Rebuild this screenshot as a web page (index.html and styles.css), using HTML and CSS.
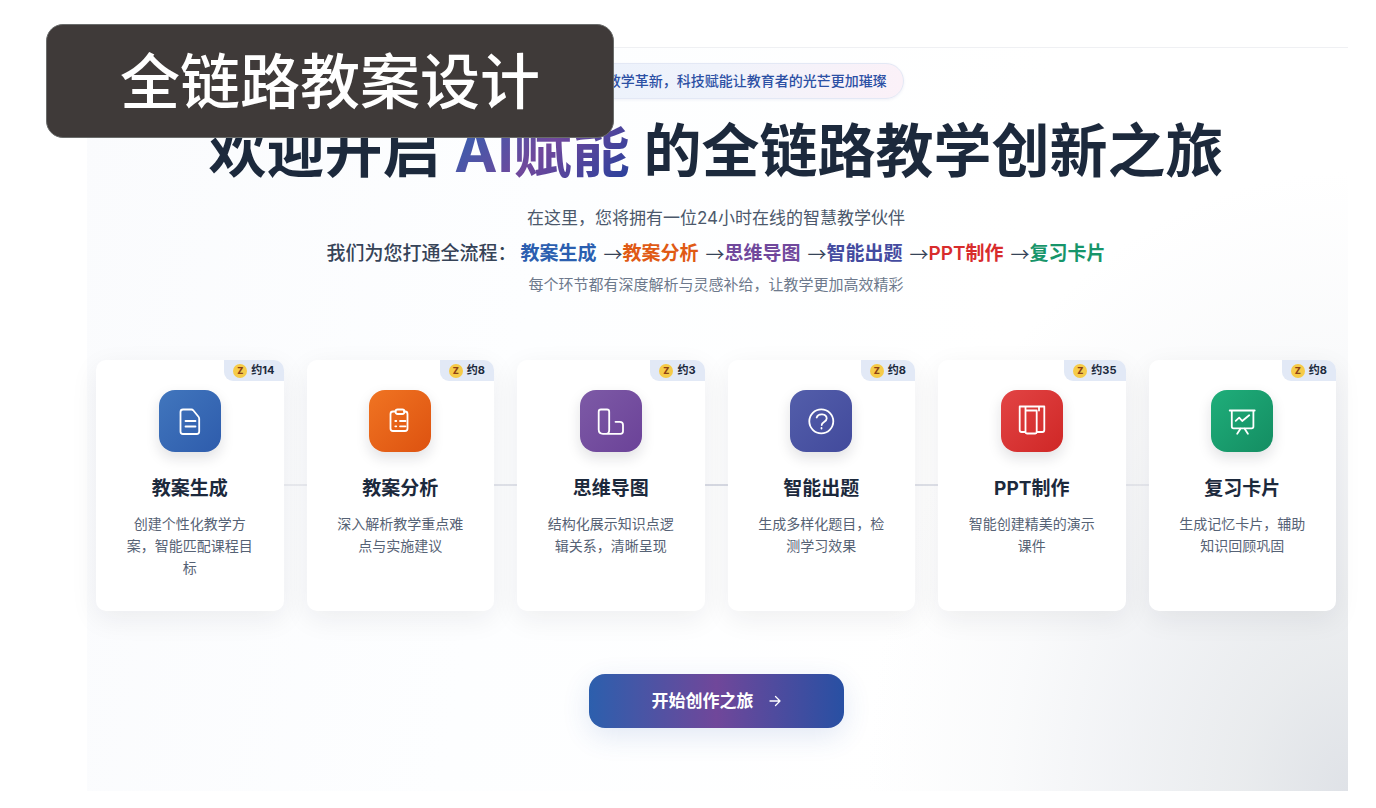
FILE: index.html
```html
<!DOCTYPE html>
<html lang="zh-CN">
<head>
<meta charset="utf-8">
<meta name="viewport" content="width=device-width, initial-scale=1">
<title>全链路教案设计</title>
<link rel="stylesheet" href="styles.css">
</head>
<body>
<div class="banner">全链路教案设计</div>
<main class="panel">
  <header class="hero">
    <p class="pill">AI驱动的教学革新，科技赋能让教育者的光芒更加璀璨</p>
    <h1 class="headline">欢迎开启 <span class="headline-accent">AI赋能</span> 的全链路教学创新之旅</h1>
    <p class="lead">在这里，您将拥有一位24小时在线的智慧教学伙伴</p>
    <p class="flow">
      <span class="flow-label">我们为您打通全流程：</span>
      <span class="flow-step blue">教案生成</span><span class="flow-arrow">→</span>
      <span class="flow-step orange">教案分析</span><span class="flow-arrow">→</span>
      <span class="flow-step purple">思维导图</span><span class="flow-arrow">→</span>
      <span class="flow-step indigo">智能出题</span><span class="flow-arrow">→</span>
      <span class="flow-step red">PPT制作</span><span class="flow-arrow">→</span>
      <span class="flow-step green">复习卡片</span>
    </p>
    <p class="note">每个环节都有深度解析与灵感补给，让教学更加高效精彩</p>
  </header>

  <section class="cards">
    <article class="card">
      <div class="cost"><span class="coin">Z</span>约14</div>
      <div class="tile tile-blue">
        <svg class="icon" viewBox="0 0 62 62"><path d="M24 19.5h8.500q1 0 1.700 .8l5.300 6.500q.7 .9 .7 2V41.500q0 2.500-2.500 2.500H24q-2.500 0-2.500-2.500V22q0-2.500 2.500-2.500z"/><path d="M26.500 31h10M26.500 36.500h10"/></svg>
      </div>
      <h2 class="card-title">教案生成</h2>
      <p class="card-text">创建个性化教学方案，智能匹配课程目标</p>
    </article>
    <article class="card">
      <div class="cost"><span class="coin">Z</span>约8</div>
      <div class="tile tile-orange">
        <svg class="icon" viewBox="0 0 62 62"><path d="M26.500 21.500H24q-2.500 0-2.500 2.500v14.500q0 2.500 2.500 2.500h12q2.500 0 2.500-2.500V24q0-2.500-2.500-2.500h-1"/><rect x="26.500" y="19.500" width="9" height="4.500" rx="2.200"/><path d="M31 31h5.500M31 36.300h5.500M26.300 31h1M26.300 36.300h1"/></svg>
      </div>
      <h2 class="card-title">教案分析</h2>
      <p class="card-text">深入解析教学重点难点与实施建议</p>
    </article>
    <article class="card">
      <div class="cost"><span class="coin">Z</span>约3</div>
      <div class="tile tile-purple">
        <svg class="icon" viewBox="0 0 62 62"><path d="M21 19.500h6q2.200 0 2.200 2.200V40q0 3.800-3 3.800H23q-4.300 0-4.300-4.300V21.700q0-2.200 2.300-2.200zM26 43.800h14.500q2.500 0 2.500-2.500V35q0-3.200-3.200-3.200h-4.300"/></svg>
      </div>
      <h2 class="card-title">思维导图</h2>
      <p class="card-text">结构化展示知识点逻辑关系，清晰呈现</p>
    </article>
    <article class="card">
      <div class="cost"><span class="coin">Z</span>约8</div>
      <div class="tile tile-indigo">
        <svg class="icon" viewBox="0 0 62 62"><circle cx="31.300" cy="31.300" r="12"/><path d="M26.700 27.500c1.500-4.500 10-4 10 1 0 3.500-5 3.500-5 6.500M31.500 38v.5"/></svg>
      </div>
      <h2 class="card-title">智能出题</h2>
      <p class="card-text">生成多样化题目，检测学习效果</p>
    </article>
    <article class="card">
      <div class="cost"><span class="coin">Z</span>约35</div>
      <div class="tile tile-red">
        <svg class="icon" viewBox="0 0 62 62"><path d="M18.700 16.500h24.600V40q0 2-2 2H35.500M24.500 42h-3.800q-2 0-2-2V16.500M24.500 16.500V42q0 1.500 1.500 1.500h8.200q1.500 0 1.500-1.500V20.500H24.500M38 16.500v4"/></svg>
      </div>
      <h2 class="card-title">PPT制作</h2>
      <p class="card-text">智能创建精美的演示课件</p>
    </article>
    <article class="card">
      <div class="cost"><span class="coin">Z</span>约8</div>
      <div class="tile tile-green">
        <svg class="icon" viewBox="0 0 62 62"><path d="M18.700 20.500h25M20.800 20.500v16q0 1.800 1.800 1.800h18q1.800 0 1.800-1.800v-16M24.700 30.800l3.500-3.200 3 3.400 7-5.700M29.800 38.300l-3.600 5.400M33.300 38.300l3.600 5.400"/></svg>
      </div>
      <h2 class="card-title">复习卡片</h2>
      <p class="card-text">生成记忆卡片，辅助知识回顾巩固</p>
    </article>
  </section>

  <button class="start" type="button">开始创作之旅
    <svg class="start-arrow" viewBox="0 0 12 12"><path d="M1 6h10M6.500 1.500L11 6l-4.500 4.500"/></svg>
  </button>
</main>
</body>
</html>
```
FILE: styles.css
```css
* {
  box-sizing: border-box;
}

body {
  margin: 0;
  background: #fff;
  color: #1c293c;
  font-family: Inter, "Noto Sans CJK SC", sans-serif;
}

h1, h2, p {
  margin: 0;
}

/* Caption laid over the page's top-left corner */
.banner {
  position: absolute;
  z-index: 2;
  top: 24px;
  left: 46px;
  padding: 9px 73px 15px;
  border: 1px solid #6a6c6b;
  border-radius: 17px;
  background: #3f3a39;
  color: #fff;
  font-family: "Noto Sans CJK SC", sans-serif;
  font-size: 60px;
  font-weight: 500;
  line-height: 88px;
  white-space: nowrap;
}

.panel {
  display: flex;
  flex-direction: column;
  align-items: center;
  margin: 47px 28px 17px 87px;
  padding: 15px 12px 63px 9px;
  border-top: 1px solid #eff0f3;
  background:
    radial-gradient(ellipse 480px 620px at 100% 100%, #dfe2e7 0%, rgba(226, 229, 232, 0.75) 22%, rgba(228, 231, 236, 0.5) 48%, rgba(234, 237, 241, 0.25) 72%, rgba(242, 244, 247, 0) 100%),
    linear-gradient(100deg, #fafbfd 0%, #fdfeff 35%, #fff 70%);
}

.hero {
  display: flex;
  flex-direction: column;
  align-items: center;
  text-align: center;
}

.pill {
  padding: 0 16px 0 22px;
  border: 1px solid #e3e8f5;
  border-radius: 18px;
  background: linear-gradient(90deg, #eaf1fc, #f0f3fb 50%, #fbf1f8);
  box-shadow: 0 1px 3px rgba(60, 80, 150, 0.08);
  color: #2c50a4;
  font-size: 14px;
  font-weight: 500;
  line-height: 34px;
}

.headline {
  margin-top: 17px;
  font-size: 58px;
  font-weight: 700;
  line-height: 70px;
  white-space: nowrap;
}

.headline-accent {
  background: linear-gradient(135deg, #2b63b2 0%, #70489c 50%, #24409c 100%);
  background-clip: text;
  -webkit-background-clip: text;
  color: transparent;
}

.lead {
  margin-top: 18px;
  color: #4b586b;
  font-size: 17px;
  line-height: 28px;
}

.flow {
  display: flex;
  margin-top: 5px;
  color: #364357;
  font-size: 19px;
  font-weight: 500;
  line-height: 34px;
}

.flow-label {
  margin-right: 4px;
}

.flow-step {
  font-weight: 600;
}

.flow-arrow {
  width: 26px;
  font-family: "Noto Sans CJK SC", sans-serif;
  font-weight: 400;
  text-align: right;
}

.blue { color: #2b5fb0; }
.orange { color: #e05a14; }
.purple { color: #70489c; }
.indigo { color: #444ba0; }
.red { color: #d82c2c; }
.green { color: #17956a; }

.note {
  margin-top: 2px;
  color: #6d798c;
  font-size: 15px;
  line-height: 24px;
}

.cards {
  position: relative;
  display: grid;
  grid-template-columns: repeat(6, minmax(0, 1fr));
  gap: 23px;
  width: 100%;
  margin-top: 63px;
}

/* Line that links the cards */
.cards::before {
  content: "";
  position: absolute;
  top: 124px;
  left: 0;
  right: 0;
  height: 2px;
  background: linear-gradient(90deg, #f4f5f7, #dadde6 50%, #eeeff2);
}

.card {
  position: relative;
  padding: 30px 28px 32px;
  border-radius: 10px;
  background: #fff;
  box-shadow: 0 8px 28px rgba(30, 32, 36, 0.07);
  text-align: center;
}

.cost {
  position: absolute;
  top: 0;
  right: 0;
  display: flex;
  align-items: center;
  gap: 4px;
  padding: 0 9px;
  border-radius: 0 10px 0 9px;
  background: #e2e9f6;
  font-size: 11px;
  font-weight: 700;
  line-height: 21px;
}

.coin {
  width: 14px;
  height: 14px;
  border-radius: 50%;
  background: #f6cb48;
  color: #8c4216;
  font-size: 9px;
  font-weight: 800;
  line-height: 14px;
}

.tile {
  width: 62px;
  height: 62px;
  margin: 0 auto;
  border-radius: 16px;
  box-shadow: 0 6px 14px rgba(20, 25, 40, 0.13);
}

.tile-blue { background: linear-gradient(135deg, #4176bd, #2e5cac); }
.tile-orange { background: linear-gradient(135deg, #f07422, #dd5210); }
.tile-purple { background: linear-gradient(135deg, #7d5aa6, #6b4298); }
.tile-indigo { background: linear-gradient(135deg, #535eaa, #424a9c); }
.tile-red { background: linear-gradient(135deg, #e24444, #cf2726); }
.tile-green { background: linear-gradient(135deg, #1fae7a, #148d62); }

.icon {
  display: block;
  fill: none;
  stroke: #fff;
  stroke-width: 1.8;
  stroke-linecap: round;
  stroke-linejoin: round;
}

.card-title {
  margin-top: 23px;
  font-size: 19px;
  font-weight: 700;
  line-height: 28px;
}

.card-text {
  margin-top: 10px;
  color: #566275;
  font-size: 14px;
  line-height: 22px;
}

.start {
  display: flex;
  align-items: center;
  justify-content: center;
  gap: 15px;
  margin-top: 63px;
  padding: 0 63px;
  border: 0;
  border-radius: 16px;
  background: linear-gradient(90deg, #2c5fad, #70479a 50%, #2850a3);
  box-shadow: 0 8px 28px rgba(50, 90, 180, 0.14);
  color: #fff;
  font-family: inherit;
  font-size: 17px;
  font-weight: 700;
  line-height: 54px;
}

.start-arrow {
  width: 12px;
  height: 12px;
  fill: none;
  stroke: #fff;
  stroke-width: 1.3;
  stroke-linecap: round;
  stroke-linejoin: round;
}
```
